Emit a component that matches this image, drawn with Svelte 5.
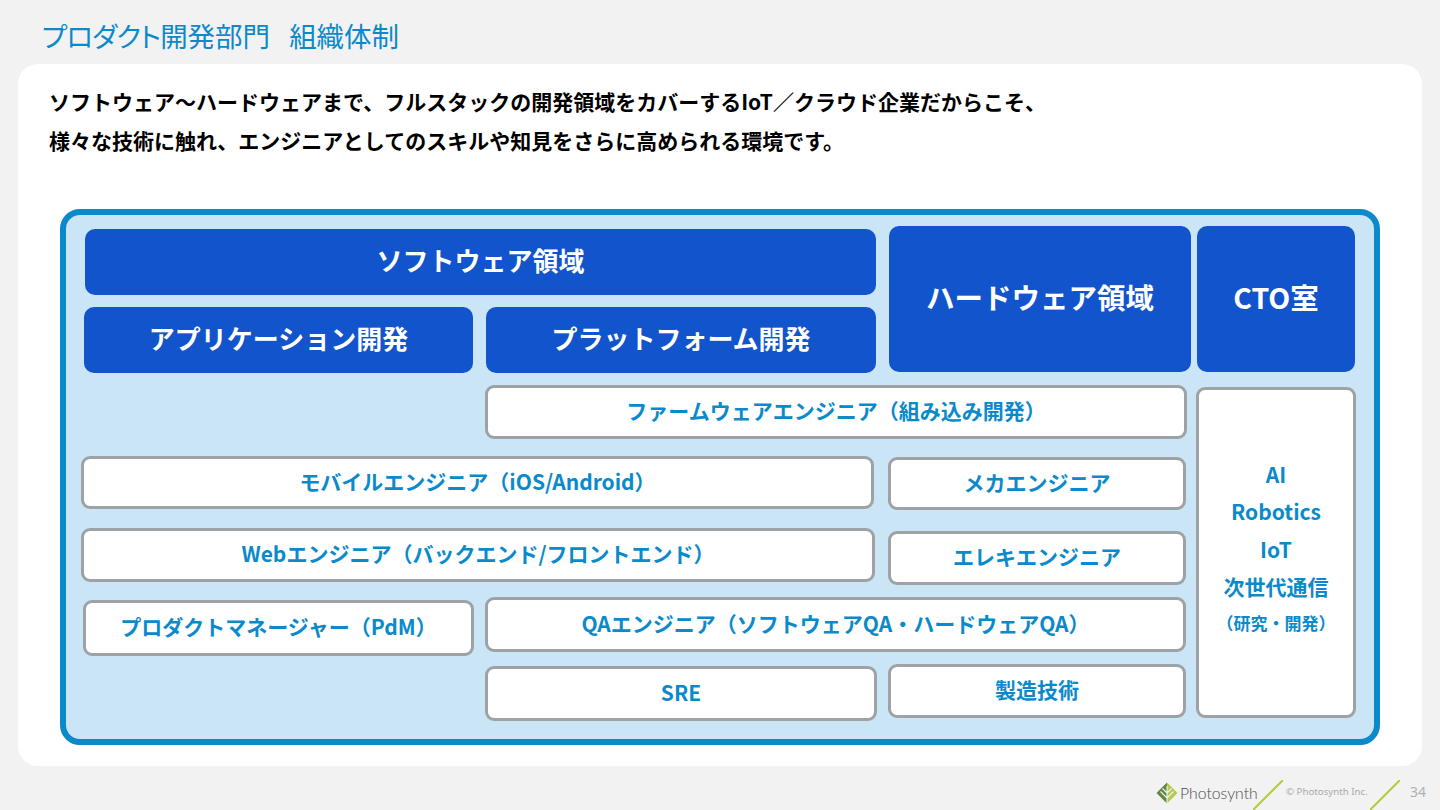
<script>
  const rows = [
    { text: 'ファームウェアエンジニア（組み込み開発）', cls: 'firmware' },
    { text: 'モバイルエンジニア（iOS/Android）', cls: 'mobile' },
    { text: 'メカエンジニア', cls: 'mecha' },
    { text: 'Webエンジニア（バックエンド/フロントエンド）', cls: 'web' },
    { text: 'エレキエンジニア', cls: 'elec' },
    { text: 'プロダクトマネージャー（PdM）', cls: 'pdm' },
    { text: 'QAエンジニア（ソフトウェアQA・ハードウェアQA）', cls: 'qa' },
    { text: 'SRE', cls: 'sre' },
    { text: '製造技術', cls: 'mfg' }
  ];
</script>

<div class="slide">
  <h1 class="title">
    <span class="dept"><span class="kana">プロダクト</span>開発部門</span>
    <span>組織体制</span>
  </h1>

  <main class="card">
    <p class="lead">ソフトウェア～ハードウェアまで、フルスタックの開発領域をカバーするIoT／クラウド企業だからこそ、</p>
    <p class="lead">様々な技術に触れ、エンジニアとしてのスキルや知見をさらに高められる環境です。</p>

    <div class="org">
      <div class="head software">ソフトウェア領域</div>
      <div class="head app">アプリケーション開発</div>
      <div class="head platform">プラットフォーム開発</div>
      <div class="head large hardware">ハードウェア領域</div>
      <div class="head large cto">CTO室</div>

      {#each rows as row}
        <div class="role {row.cls}">{row.text}</div>
      {/each}

      <div class="role research">
        <span>AI</span>
        <span>Robotics</span>
        <span>IoT</span>
        <span>次世代通信</span>
        <small>（研究・開発）</small>
      </div>
    </div>
  </main>

  <footer class="footer">
    <svg class="mark" viewBox="0 0 22 22" aria-hidden="true">
      <path d="M11 .5 L21.5 11 L11 21.5 Z" fill="#b3c94f" />
      <path d="M11 .5 L.5 11 L11 21.5 Z" fill="#5f8740" />
      <path d="M11 4 L11 22 M11 11 L15.5 6.5 M11 16 L17.5 9.5 M11 11 L6.5 6.5 M11 16 L4.5 9.5" stroke="#f2f2f2" stroke-width="1.1" fill="none" />
    </svg>
    <span class="brand">Photosynth</span>
    <svg class="slash first" viewBox="0 0 30 30" aria-hidden="true"><path d="M0 30 L30 0" /></svg>
    <span class="copy">© Photosynth Inc.</span>
    <svg class="slash" viewBox="0 0 30 30" aria-hidden="true"><path d="M0 30 L30 0" /></svg>
    <span class="page">34</span>
  </footer>
</div>

<style>
  :global(body) {
    margin: 0;
  }

  .slide {
    width: 1440px;
    height: 810px;
    overflow: hidden;
    background: #f2f2f2;
    font-family: "Noto Sans CJK JP", "Noto Sans", sans-serif;
    display: flex;
    flex-direction: column;
  }

  .title {
    margin: 0;
    height: 64px;
    padding-left: 42px;
    box-sizing: border-box;
    display: flex;
    gap: 19px;
    font-size: 27.5px;
    line-height: 70px;
    font-weight: 400;
    color: #0a8acb;
    font-feature-settings: "palt";
  }

  .kana {
    letter-spacing: -1px;
  }

  .card {
    margin: 0 18px;
    height: 702px;
    box-sizing: border-box;
    background: #fff;
    border-radius: 20px;
    padding: 18px 0 0 31px;
  }

  .lead {
    margin: 0;
    height: 39px;
    line-height: 39px;
    font-size: 21px;
    font-weight: 700;
    color: #000;
  }

  .org {
    margin: 49px 0 0 11px;
    width: 1320px;
    height: 536px;
    box-sizing: border-box;
    background: #c9e5f6;
    border: 6px solid #0a8acb;
    border-radius: 20px;
    padding: 11px 0 0 15px;
    display: grid;
    grid-template-columns: 404px 403px 308px 160px;
    grid-template-rows: 69px 66px 59px 60px 57px 55px 57px;
    row-gap: 12px;
  }

  .head {
    background: #1254cb;
    color: #fff;
    border-radius: 10px;
    font-weight: 700;
    font-size: 26px;
    display: flex;
    align-items: center;
    justify-content: center;
    padding-bottom: 6px;
    box-sizing: border-box;
  }

  .head.large {
    font-size: 28.5px;
  }

  .software {
    grid-column: 1 / 3;
    grid-row: 1;
    margin: 3px 12px 0 4px;
  }

  .app {
    grid-column: 1;
    grid-row: 2;
    margin: 0 12px 0 3px;
  }

  .platform {
    grid-column: 2;
    grid-row: 2;
    margin: 0 12px 0 1px;
  }

  .hardware {
    grid-column: 3;
    grid-row: 1 / 3;
    margin: 0 5px 1px 1px;
  }

  .cto {
    grid-column: 4;
    grid-row: 1 / 3;
    margin: 0 1px 1px 1px;
  }

  .role {
    box-sizing: border-box;
    background: #fff;
    border: 3px solid #9fa2a5;
    border-radius: 9px;
    color: #0a8acb;
    font-weight: 700;
    font-size: 21px;
    display: flex;
    align-items: center;
    justify-content: center;
    padding-bottom: 4px;
  }

  .firmware { grid-column: 2 / 4; grid-row: 3; margin: 0 9px 5px 0; }
  .mobile { grid-column: 1 / 3; grid-row: 4; margin: 0 14px 7px 0; }
  .mecha { grid-column: 3; grid-row: 4; margin: 1px 10px 6px 0; }
  .web { grid-column: 1 / 3; grid-row: 5; margin: 0 13px 3px 0; }
  .elec { grid-column: 3; grid-row: 5; margin: 3px 10px 0 0; }
  .pdm { grid-column: 1; grid-row: 6; align-self: start; height: 56px; margin: 3px 11px 0 2px; }
  .qa { grid-column: 2 / 4; grid-row: 6; margin-right: 10px; }
  .sre { grid-column: 2; grid-row: 7; margin: 2px 11px 0 0; }
  .mfg { grid-column: 3; grid-row: 7; margin: 0 10px 3px 0; }

  .research {
    grid-column: 4;
    grid-row: 3 / 8;
    margin: 2px 0 3px;
    padding-bottom: 10px;
    flex-direction: column;
    line-height: 37.5px;
  }

  .research small {
    font-size: 17px;
    line-height: 34px;
  }

  .footer {
    height: 44px;
    box-sizing: border-box;
    display: flex;
    align-items: center;
    padding: 9px 0 0 1156px;
    position: relative;
  }

  .mark {
    width: 22px;
    height: 22px;
    flex: none;
  }

  .brand {
    margin-left: 2px;
    font-family: Lato, sans-serif;
    font-weight: 300;
    font-size: 15.8px;
    color: #4a4a4a;
  }

  .slash {
    width: 30px;
    height: 30px;
    position: absolute;
    top: 14px;
    left: 1370px;
  }

  .slash.first {
    left: 1253px;
  }

  .slash path {
    stroke: #b5cc3a;
    stroke-width: 2;
    fill: none;
  }

  .copy {
    position: absolute;
    left: 1286px;
    top: 19px;
    font-family: "Noto Sans", sans-serif;
    font-size: 9.7px;
    color: #aaa;
  }

  .page {
    position: absolute;
    left: 1410px;
    top: 16px;
    font-family: "Noto Sans", sans-serif;
    font-size: 14px;
    color: #b0b0b0;
  }
</style>
